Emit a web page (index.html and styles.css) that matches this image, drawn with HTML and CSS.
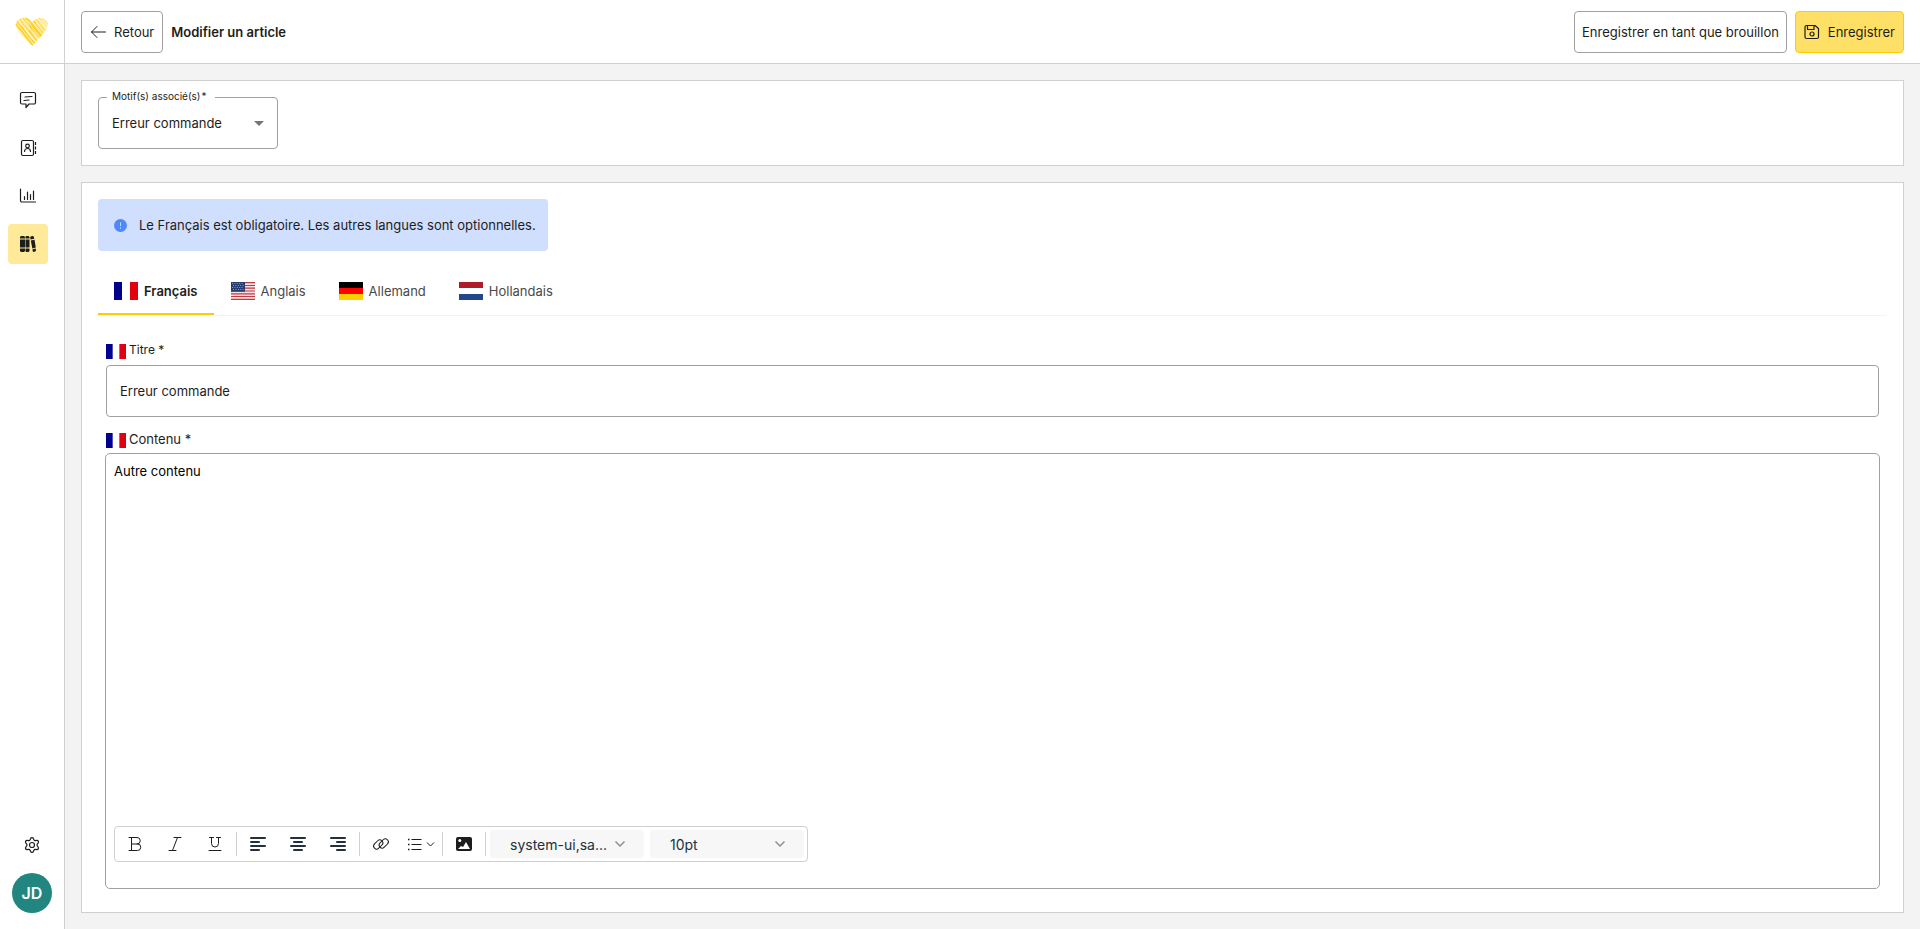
FILE: index.html
```html
<!DOCTYPE html>
<html lang="fr">
<head>
  <meta charset="UTF-8">
  <meta name="viewport" content="width=device-width, initial-scale=1.0">
  <title>Modifier un article</title>
  <link rel="stylesheet" href="styles.css">
</head>
<body>
  <!-- shared flag -->
  <svg class="defs" aria-hidden="true">
    <symbol id="flag-fr" viewBox="0 0 24 18">
      <path fill="#fff" d="M0 0h24v18H0z"/>
      <path fill="#00008f" d="M0 0h8v18H0z"/>
      <path fill="#e1000f" d="M16 0h8v18h-8z"/>
    </symbol>
  </svg>

  <aside class="sidebar">
    <a class="logo" href="#" aria-label="Accueil">
      <svg width="34" height="30" viewBox="0 0 34 30">
        <clipPath id="heart"><path d="M17 29 L15 27 13.500 26 9 21 7 19.500 2 13 1.500 10 .5 8 2 4 5 2 6 1 11 .8 14 2 17 5.500 19 3 22 2 24 .8 28 1.500 31 3.500 33 6 32.500 9 31 13 29 15 27 18.500 24 21 20 26z"/></clipPath>
        <g clip-path="url(#heart)" fill="none">
          <path fill="#ffeeb0" d="M0 0h34v30H0z"/>
          <path stroke="#ffd021" stroke-width="1.800" d="M-1 5l20 25M1 3l21 26M4 1l20 25M7 -1l19 24M10 -1l19 24M13 2l16 20M19 4l11 14"/>
          <path stroke="#ffdd5c" stroke-width="1.300" d="M20 1l12 15M23 0l11 13M27 0l8 9M30 1l4 5"/>
          <path stroke="#fff" stroke-width=".6" d="M0 8l7 9M3 4l4 5M9 11l9 12M5 2l9 11M12 3l4 5M12 15l8 10M17 12l8 10M21 6l8 10M24 2l8 10M28 1l6 7M4 14l13 15M9 1l5 7M20 3l4 5M26 3l6 8M19 18l4 5"/>
        </g>
      </svg>
    </a>
    <nav class="nav">
      <a class="nav-item" href="#" aria-label="Messages">
        <svg class="icon" viewBox="0 0 16 16"><path d="M2 .5h12a1.500 1.500 0 0 1 1.500 1.500v8.500a1.500 1.500 0 0 1-1.500 1.500H9l-3 3.500V12H2A1.500 1.500 0 0 1 .5 10.500V2A1.500 1.500 0 0 1 2 .5zM5 5l7-.5M4 8.500l5-.5"/></svg>
      </a>
      <a class="nav-item" href="#" aria-label="Contacts">
        <svg class="icon" viewBox="0 0 16 16"><rect x="1.500" y=".5" width="12" height="15" rx="1.500"/><circle cx="7.500" cy="6" r="1.800"/><path d="M4.500 11.500a3 3 0 0 1 6 0"/><path stroke-linecap="butt" d="M15.500 2v3M15.500 6.500v3M15.500 11v3"/></svg>
      </a>
      <a class="nav-item" href="#" aria-label="Statistiques">
        <svg class="icon" viewBox="0 0 16 16"><path d="M.5 1v11.500a1.500 1.500 0 0 0 1.500 1.500h13.500M4.500 8.500v3M7.500 4v7.500M10.500 6.500v5M13.500 3v8.500"/></svg>
      </a>
      <a class="nav-item active" href="#" aria-label="Base de connaissances">
        <svg width="16" height="16" viewBox="0 0 16 16" fill="#1d1d1b"><path d="M1 0h3l1 1v1.500H0V1zM0 3.500h5v8H0zM0 12.500h5V15l-1 1H1l-1-1zM6 0h2.500l1 1v1.500H5.500V1zM5.500 3.500h4v8h-4zM5.500 12.500h4V15l-1 1H6l-.5-1zM11 .3l2-.3.8.8.5 1.900-3.700.8-.5-2.100zM10.800 4.500l3.700-.8 1.300 7.800-3.500.9zM12.500 13.300l3.200-.8.3 2-.7.9-2 .6-.6-.8z"/></svg>
      </a>
    </nav>
    <div class="account">
      <a class="settings" href="#" aria-label="Paramètres">
        <svg class="icon" viewBox="0 0 16 16"><circle cx="8" cy="8" r="2.500"/><path d="M6.600 1.500a1.500 1.500 0 0 1 2.800 0l.5 1.200a1.500 1.500 0 0 0 1.600.9l1.300-.2a1.500 1.500 0 0 1 1.400 2.400l-.8 1.200a1.500 1.500 0 0 0 0 2l.8 1.200a1.500 1.500 0 0 1-1.400 2.400l-1.300-.2a1.500 1.500 0 0 0-1.600.9l-.5 1.200a1.500 1.500 0 0 1-2.800 0l-.5-1.200a1.500 1.500 0 0 0-1.600-.9l-1.300.2a1.500 1.500 0 0 1-1.400-2.400l.8-1.200a1.500 1.500 0 0 0 0-2l-.8-1.200a1.500 1.500 0 0 1 1.400-2.400l1.300.2a1.500 1.500 0 0 0 1.600-.9z"/></svg>
      </a>
      <button class="avatar" type="button">JD</button>
    </div>
  </aside>

  <div class="page">
    <header class="topbar">
      <button class="btn" type="button">
        <svg class="icon icon-thin" viewBox="0 0 16 16"><path d="M15.500 8H1.500M7 2.500L1.500 8 7 13.500"/></svg>
        Retour
      </button>
      <h1 class="title">Modifier un article</h1>
      <button class="btn draft" type="button">Enregistrer en tant que brouillon</button>
      <button class="btn btn-primary" type="button">
        <svg class="icon" viewBox="0 0 16 16"><path d="M2.500 1.500H11l3.500 3V13a1.500 1.500 0 0 1-1.500 1.500H2.500A1.500 1.500 0 0 1 1 13V3a1.500 1.500 0 0 1 1.500-1.500zM3.500 1.500v4h6.500v-4"/><circle cx="8" cy="10" r="2"/></svg>
        Enregistrer
      </button>
    </header>

    <main class="content">
      <section class="card">
        <div class="select-field">
          <label for="motif">Motif(s) associé(s)<span>*</span></label>
          <select id="motif">
            <option>Erreur commande</option>
          </select>
          <svg class="caret" width="10" height="5" viewBox="0 0 10 5"><path fill="#757575" d="M0 0h10L5 5z"/></svg>
        </div>
      </section>

      <section class="card article">
        <div class="alert">
          <svg width="13" height="13" viewBox="0 0 14 14"><circle cx="7" cy="7" r="7" fill="#4d88ff"/><path stroke="#d1dfff" d="M7 3.500v4M7 9v1.500"/></svg>
          <span>Le Français est obligatoire. Les autres langues sont optionnelles.</span>
        </div>

        <div class="tabs" role="tablist">
          <button class="tab active" type="button" role="tab" aria-selected="true">
            <svg class="flag"><use href="#flag-fr"/></svg>
            Français
          </button>
          <button class="tab" type="button" role="tab">
            <svg class="flag" viewBox="0 0 24 18">
              <path fill="#f4dfe1" d="M0 0h24v18H0z"/>
              <path stroke="#bd3d44" stroke-width="1.200" d="M0 .7h24M0 3.500h24M0 6.200h24M0 9h24M0 11.800h24M0 14.500h24M0 17.300h24"/>
              <path fill="#263c6e" d="M0 0h14v9.700H0z"/>
              <path stroke="#91a0bd" stroke-dasharray="1 1.400" d="M1 1.500h12M2 3.500h11M1 5.500h12M2 7.500h11"/>
            </svg>
            Anglais
          </button>
          <button class="tab" type="button" role="tab">
            <svg class="flag" viewBox="0 0 24 18"><path d="M0 0h24v6H0z"/><path fill="#f00" d="M0 6h24v6H0z"/><path fill="#fc0" d="M0 12h24v6H0z"/></svg>
            Allemand
          </button>
          <button class="tab" type="button" role="tab">
            <svg class="flag" viewBox="0 0 24 18"><path fill="#ae1c28" d="M0 0h24v6H0z"/><path fill="#fff" d="M0 6h24v6H0z"/><path fill="#21468b" d="M0 12h24v6H0z"/></svg>
            Hollandais
          </button>
        </div>

        <form class="fields">
          <label class="field-label" for="titre"><svg class="flag-small"><use href="#flag-fr"/></svg>Titre *</label>
          <input class="text-input" id="titre" type="text" value="Erreur commande">

          <label class="field-label editor-label" for="contenu"><svg class="flag-small"><use href="#flag-fr"/></svg>Contenu *</label>
          <div class="editor">
            <textarea id="contenu">Autre contenu</textarea>
            <div class="toolbar" role="toolbar">
              <button class="tool" type="button" aria-label="Gras">
                <svg class="icon icon-thin" viewBox="0 0 16 16"><path d="M2 1.500h8a3.200 3.200 0 0 1 0 6.500H4.500M10 8h.5a3.200 3.200 0 0 1 0 6.500H2M4.500 1.500v13"/></svg>
              </button>
              <button class="tool" type="button" aria-label="Italique">
                <svg class="icon icon-thin" viewBox="0 0 16 16"><path d="M7 1.500h7M2 14.500h7M10.500 1.500l-5 13"/></svg>
              </button>
              <button class="tool" type="button" aria-label="Souligné">
                <svg class="icon icon-thin" viewBox="0 0 16 16"><path d="M2.500 1.500h4M9.500 1.500h4M4.500 1.500v6a3.500 3.500 0 0 0 7 0v-6M2 14.500h12"/></svg>
              </button>
              <span class="sep"></span>
              <button class="tool" type="button" aria-label="Aligner à gauche">
                <svg class="icon icon-bold" viewBox="0 0 16 16"><path d="M1 2h14M1 6h8M1 10h14M1 14h8"/></svg>
              </button>
              <button class="tool" type="button" aria-label="Centrer">
                <svg class="icon icon-bold" viewBox="0 0 16 16"><path d="M1 2h14M4 6h8M1 10h14M4 14h8"/></svg>
              </button>
              <button class="tool" type="button" aria-label="Aligner à droite">
                <svg class="icon icon-bold" viewBox="0 0 16 16"><path d="M1 2h14M7 6h8M1 10h14M7 14h8"/></svg>
              </button>
              <span class="sep"></span>
              <button class="tool" type="button" aria-label="Lien">
                <svg class="icon icon-thin" viewBox="0 0 16 16"><rect x="0" y="5.500" width="10.500" height="6" rx="3" transform="rotate(-45 5.200 8.500)"/><rect x="5.500" y="4.500" width="10.500" height="6" rx="3" transform="rotate(-45 10.700 7.500)"/></svg>
              </button>
              <button class="tool" type="button" aria-label="Liste">
                <svg class="icon-list" width="28" height="16" viewBox="0 0 28 16"><path d="M4.500 3.500h10M4.500 8.500h10M4.500 13.500h10M20 6.500l3.500 3.500L27 6.500"/><path class="dots" d="M1 3.500h1.500M1 8.500h1.500M1 13.500h1.500"/></svg>
              </button>
              <span class="sep"></span>
              <button class="tool" type="button" aria-label="Image">
                <svg width="16" height="16" viewBox="0 0 16 16"><rect y="1" width="16" height="14" rx="2" fill="#1d1d1b"/><circle cx="3.800" cy="4.500" r="1.500" fill="#fff"/><path fill="#fff" d="M2 13l3-3 2 1 3-5 4 7z"/></svg>
              </button>
              <span class="sep"></span>
              <div class="tool-select">
                <select aria-label="Police"><option>system-ui,sa...</option></select>
                <svg width="10" height="6" viewBox="0 0 10 6"><path d="M.5.5L5 5 9.500.5"/></svg>
              </div>
              <div class="tool-select">
                <select aria-label="Taille"><option>10pt</option></select>
                <svg width="10" height="6" viewBox="0 0 10 6"><path d="M.5.5L5 5 9.500.5"/></svg>
              </div>
            </div>
          </div>
        </form>
      </section>
    </main>
  </div>
</body>
</html>
```
FILE: styles.css
```css
* {
  box-sizing: border-box;
}

body {
  margin: 0;
  display: flex;
  min-height: 100vh;
  background: #f3f3f3;
  color: #1d1d1b;
  font-family: Inter, sans-serif;
  font-size: 13px;
  line-height: 20px;
}

button, input, select, textarea {
  font: inherit;
  color: inherit;
}

button {
  cursor: pointer;
}

.defs {
  position: absolute;
  width: 0;
  height: 0;
}

.icon {
  width: 16px;
  height: 16px;
  overflow: visible;
  fill: none;
  stroke: #1d1d1b;
  stroke-width: 1.2;
  stroke-linecap: round;
  stroke-linejoin: round;
}

.icon-thin {
  stroke-width: 1;
}

.icon-bold {
  stroke: #222f3e;
  stroke-width: 2;
}

/* sidebar */
.sidebar {
  display: flex;
  flex-direction: column;
  width: 65px;
  flex-shrink: 0;
  background: #fff;
  border-right: 1px solid #d0d0d0;
}

.logo {
  display: flex;
  align-items: center;
  justify-content: center;
  height: 64px;
  border-bottom: 1px solid #d0d0d0;
}

.nav {
  display: flex;
  flex-direction: column;
  gap: 8px;
  padding: 16px 8px;
}

.nav-item {
  display: flex;
  align-items: center;
  justify-content: center;
  width: 40px;
  height: 40px;
  border-radius: 4px;
}

.nav-item.active {
  background: #ffea99;
}

.account {
  display: flex;
  flex-direction: column;
  align-items: center;
  gap: 20px;
  margin-top: auto;
  padding-bottom: 16px;
}

.settings {
  display: flex;
}

.avatar {
  width: 40px;
  height: 40px;
  padding: 0;
  border: 0;
  border-radius: 50%;
  background: #21867f;
  color: #fff;
  font-size: 16px;
  font-weight: 600;
}

/* top bar */
.page {
  display: flex;
  flex-direction: column;
  flex: 1;
  min-width: 0;
}

.topbar {
  display: flex;
  align-items: center;
  gap: 8px;
  height: 64px;
  padding: 0 16px;
  background: #fff;
  border-bottom: 1px solid #d0d0d0;
}

.btn {
  display: flex;
  align-items: center;
  gap: 8px;
  height: 42px;
  padding: 0 8px;
  border: 1px solid #a0a0a0;
  border-radius: 4px;
  background: #fff;
}

.btn-primary {
  border-color: #ffcc00;
  background: #ffe066;
}

.title {
  margin: 0;
  font-size: 13px;
  font-weight: 600;
}

.draft {
  margin-left: auto;
  padding: 0 7px;
}

/* content */
.content {
  display: flex;
  flex-direction: column;
  flex: 1;
  gap: 16px;
  padding: 16px;
}

.card {
  padding: 16px;
  background: #fff;
  border: 1px solid #d0d0d0;
}

.select-field {
  position: relative;
  width: 180px;
}

.select-field label {
  position: absolute;
  top: -8px;
  left: 9px;
  padding: 0 8px 0 5px;
  background: #fff;
  font-size: 10px;
  line-height: 14px;
}

.select-field label span {
  margin-left: 1px;
}

.select-field select {
  display: block;
  width: 100%;
  height: 52px;
  padding: 0 32px 0 13px;
  border: 1px solid #a0a0a0;
  border-radius: 4px;
  background: #fff;
  appearance: none;
}

.caret {
  position: absolute;
  top: 24px;
  right: 14px;
  pointer-events: none;
}

.article {
  display: flex;
  flex-direction: column;
  flex: 1;
}

.alert {
  display: flex;
  align-items: center;
  align-self: flex-start;
  gap: 12px;
  height: 52px;
  padding: 0 12px 0 16px;
  border-radius: 4px;
  background: #d1dfff;
}

/* tabs */
.tabs {
  display: flex;
  gap: 1px;
  margin-top: 16px;
  border-bottom: 1px solid #f3f3f3;
}

.tab {
  display: flex;
  align-items: center;
  gap: 6px;
  height: 48px;
  padding: 2px 16px 0;
  border: 0;
  border-bottom: 2px solid transparent;
  background: none;
  color: #4a4a49;
}

.tab.active {
  border-color: #ffcc00;
  color: #1d1d1b;
  font-weight: 600;
}

.flag {
  width: 24px;
  height: 18px;
}

/* fields */
.fields {
  display: flex;
  flex-direction: column;
  flex: 1;
  padding: 23px 8px 7px;
}

.field-label {
  display: flex;
  align-items: flex-start;
  gap: 3px;
  height: 26px;
  padding-top: 1px;
  font-size: 12px;
}

.editor-label {
  height: 25px;
  font-size: 13px;
}

.flag-small {
  width: 20px;
  height: 15px;
  margin-top: 4px;
}

.text-input {
  height: 52px;
  margin-bottom: 11px;
  padding: 0 13px;
  border: 1px solid #a0a0a0;
  border-radius: 4px;
  background: #fff;
}

.editor {
  display: flex;
  flex-direction: column;
  flex: 1;
  align-items: flex-start;
  margin: 0 -1px;
  padding: 8px 8px 26px;
  border: 1px solid #a0a0a0;
  border-radius: 5px;
}

.editor textarea {
  flex: 1;
  width: 100%;
  min-height: 120px;
  padding: 0;
  border: 0;
  outline: 0;
  resize: none;
  color: #000;
  line-height: 18px;
}

.toolbar {
  display: flex;
  align-items: center;
  height: 36px;
  padding-right: 3px;
  border: 1px solid #d0d0d0;
  border-radius: 4px;
}

.tool {
  display: flex;
  align-items: center;
  justify-content: center;
  width: 40px;
  height: 28px;
  padding: 0;
  border: 0;
  background: none;
}

.sep {
  width: 1px;
  height: 24px;
  margin: 0 1px;
  background: #d0d0d0;
}

.icon-list {
  fill: none;
  stroke: #1d1d1b;
}

.icon-list .dots {
  stroke-width: 1.5;
}

.tool-select {
  position: relative;
  width: 154px;
  margin-left: 3px;
}

.tool-select + .tool-select {
  margin-left: 6px;
}

.tool-select select {
  display: block;
  width: 100%;
  height: 28px;
  padding: 2px 36px 0 20px;
  border: 0;
  border-radius: 3px;
  background: #f7f7f7;
  color: #222f3e;
  font-size: 14px;
  appearance: none;
}

.tool-select svg {
  position: absolute;
  top: 11px;
  right: 19px;
  fill: none;
  stroke: #8b929b;
  stroke-width: 1.5;
  pointer-events: none;
}
```
